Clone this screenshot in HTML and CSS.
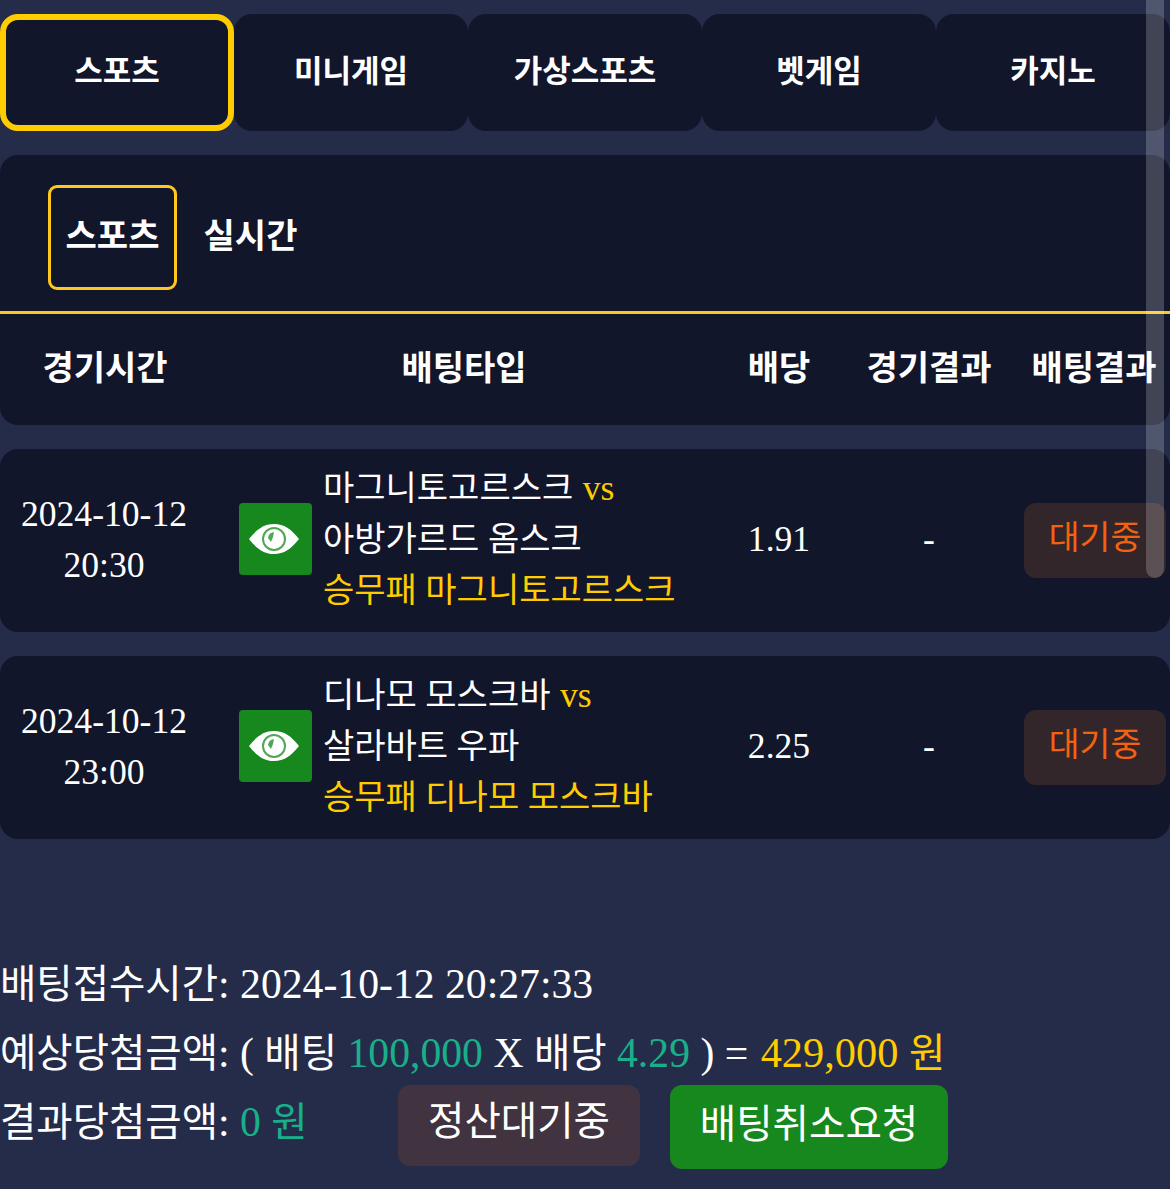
FILE: index.html
```html
<!DOCTYPE html>
<html lang="ko">
<head>
  <meta charset="UTF-8" />
  <meta name="viewport" content="width=device-width, initial-scale=1" />
  <title>배팅내역</title>
  <link rel="stylesheet" href="styles.css">
</head>
<body>
  <div class="scrollbar"></div>

  <div class="tabs">
    <div class="tab active">스포츠</div>
    <div class="tab">미니게임</div>
    <div class="tab">가상스포츠</div>
    <div class="tab">벳게임</div>
    <div class="tab">카지노</div>
  </div>

  <div class="panel">
    <div class="subtabs">
      <div class="subtab active">스포츠</div>
      <div class="subtab">실시간</div>
    </div>
    <div class="head">
      <div>경기시간</div>
      <div>배팅타입</div>
      <div>배당</div>
      <div>경기결과</div>
      <div>배팅결과</div>
    </div>
  </div>

  <div class="row">
    <div class="time">2024-10-12<br>20:30</div>
    <div class="type">
      <span class="eye">
        <svg width="50" height="32" viewBox="0 0 50 32"><path d="M0 16C8 6 15 1 25 1s17 5 25 15c-8 10-15 15-25 15S8 26 0 16z" fill="#fff"/><circle cx="25" cy="16" r="11" fill="#fff" stroke="#4fa653" stroke-width="2"/><path d="M19 15a7 7 0 0 1 6-6l-1 5-2 5z" fill="#4fa653"/></svg>
      </span>
      <div class="teams">
        <div>마그니토고르스크 <span class="gold vs">vs</span></div>
        <div>아방가르드 옴스크</div>
        <div class="gold">승무패 마그니토고르스크</div>
      </div>
    </div>
    <div class="cell">1.91</div>
    <div class="cell">-</div>
    <div class="status"><span class="badge">대기중</span></div>
  </div>

  <div class="row">
    <div class="time">2024-10-12<br>23:00</div>
    <div class="type">
      <span class="eye">
        <svg width="50" height="32" viewBox="0 0 50 32"><path d="M0 16C8 6 15 1 25 1s17 5 25 15c-8 10-15 15-25 15S8 26 0 16z" fill="#fff"/><circle cx="25" cy="16" r="11" fill="#fff" stroke="#4fa653" stroke-width="2"/><path d="M19 15a7 7 0 0 1 6-6l-1 5-2 5z" fill="#4fa653"/></svg>
      </span>
      <div class="teams">
        <div>디나모 모스크바 <span class="gold vs">vs</span></div>
        <div>살라바트 우파</div>
        <div class="gold">승무패 디나모 모스크바</div>
      </div>
    </div>
    <div class="cell">2.25</div>
    <div class="cell">-</div>
    <div class="status"><span class="badge">대기중</span></div>
  </div>

  <div class="summary">
    <div class="line"><span class="ko">배팅접수시간</span>: 2024-10-12 20:27:33</div>
    <div class="line"><span class="ko">예상당첨금액</span>: ( <span class="ko">배팅</span> <span class="teal">100,000</span> X <span class="ko">배당</span> <span class="teal">4.29</span> ) = <span class="gold win">429,000 <span class="ko">원</span></span></div>
    <div class="line last">
      <span class="result"><span class="ko">결과당첨금액</span>: <span class="teal">0 <span class="ko">원</span></span></span>
      <span class="btn wait">정산대기중</span>
      <span class="btn cancel">배팅취소요청</span>
    </div>
  </div>
</body>
</html>
```

FILE: styles.css
```css
html, body {
  height: 100%;
}
body {
  margin: 0;
  padding-top: 14px;
  height: 1175px;
  overflow: hidden;
  background-color: #252c49;
  color: #fff;
  font-family: 'Liberation Serif', 'Noto Sans CJK KR', serif;
  font-size: 35.6px;
  line-height: 51px;
}
.scrollbar {
  position: absolute;
  top: 0;
  left: 1146px;
  width: 18px;
  height: 578px;
  border-radius: 0 0 9px 9px;
  background-color: rgba(255, 255, 255, 0.2);
}
.tabs {
  display: grid;
  grid-template-columns: repeat(5, 234px);
}
.tab {
  box-sizing: border-box;
  height: 117px;
  padding-top: 31px;
  background-color: #12162b;
  border-radius: 18px;
  text-align: center;
  font-family: 'Noto Sans CJK KR', sans-serif;
  font-size: 31px;
  line-height: 48px;
  font-weight: 700;
}
.tab.active {
  border: 6px solid #ffcc00;
  padding-top: 25px;
}
.panel {
  margin-top: 24px;
  background-color: #12162b;
  border-radius: 18px;
  height: 270px;
}
.subtabs {
  display: flex;
  padding: 30px 0 0 48px;
  height: 126px;
  border-bottom: 3px solid #ffc81e;
  font-family: 'Noto Sans CJK KR', sans-serif;
  font-size: 34px;
  line-height: 48px;
  font-weight: 700;
}
.subtab {
  box-sizing: border-box;
  width: 129px;
  height: 105px;
  padding-top: 22px;
  border-radius: 9px;
  text-align: center;
  border: 3px solid transparent;
}
.subtab.active {
  border-color: #ffc81e;
}
.subtab + .subtab {
  margin-left: 9px;
}
.head, .row {
  display: grid;
  grid-template-columns: 210px 508px 122px 178px 152px;
  text-align: center;
}
.head {
  padding-top: 28px;
  font-family: 'Noto Sans CJK KR', sans-serif;
  font-size: 34px;
  line-height: 48px;
  font-weight: 700;
}
.row {
  margin-top: 24px;
  height: 183px;
  align-items: center;
  background-color: #12162b;
  border-radius: 18px;
}
.time {
  padding: 0 2px 2px 0;
}
.cell {
  padding-bottom: 2px;
}
.type {
  display: flex;
  align-items: center;
  gap: 12px;
  padding-left: 29px;
  text-align: left;
}
.eye {
  display: flex;
  align-items: center;
  justify-content: center;
  flex: none;
  box-sizing: border-box;
  width: 73px;
  height: 72px;
  margin-top: -4px;
  padding-right: 4px;
  border-radius: 4px;
  background-color: #17881e;
}
.teams {
  font-size: 34px;
  margin: -2px 0 0 -1px;
}
.vs {
  font-size: 35.6px;
  margin-left: 1px;
}
.gold {
  color: #ffcc00;
}
.teal {
  color: #1aaf8b;
}
.badge {
  display: inline-block;
  width: 142px;
  height: 75px;
  margin-left: 2px;
  font-size: 33.5px;
  line-height: 70px;
  border-radius: 12px;
  color: #f5620f;
  background-color: #33262b;
}
.summary {
  margin-top: 111px;
  font-size: 41.7px;
  line-height: 68px;
}
.ko {
  font-size: 39.5px;
}
.win {
  margin-left: 2px;
  font-size: 42.4px;
}
.line.last {
  display: flex;
  align-items: flex-start;
}
.result {
  width: 398px;
}
.btn {
  box-sizing: border-box;
  margin-top: -3px;
  border-radius: 12px;
  text-align: center;
  font-size: 39.6px;
  line-height: 74px;
}
.wait {
  width: 242px;
  height: 81px;
  background-color: #41333f;
}
.cancel {
  margin-left: 30px;
  width: 278px;
  height: 84px;
  line-height: 80px;
  background-color: #17881e;
}
```
